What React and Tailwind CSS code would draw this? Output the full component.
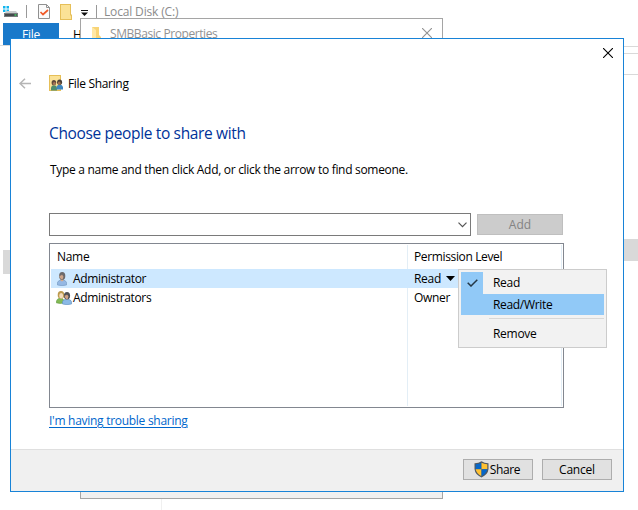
import React from "react";

function CloseIcon({ className }) {
  return (
    <svg className={className} width="10" height="10" viewBox="0 0 10 10" fill="none" stroke="currentColor" strokeWidth="1.1">
      <path d="M0 0L10 10M10 0L0 10" />
    </svg>
  );
}

function FolderIcon({ people }) {
  return (
    <svg width="14" height="16" viewBox="0 0 14 16">
      {people ? (
        <path d="M0 0H12V16H0Z" fill="#e6bf58" />
      ) : (
        <path d="M0 0H11V10.500H12V16H0Z" fill="#e6bf58" />
      )}
      {people ? (
        <path d="M1 1H11V15H1Z" fill="#fbe296" />
      ) : (
        <path d="M1 1H10V11.500H11V15H1Z" fill="#fbe296" />
      )}
      {people && (
        <g>
          <path d="M2 15.500V12.500Q2.500 10.300 5 10.300Q7.500 10.300 8 12.500V15.500Z" fill="#4f8d6c" />
          <ellipse cx="4.900" cy="7.700" rx="2.300" ry="2.600" fill="#60493a" />
          <ellipse cx="5.300" cy="8.600" rx="1.400" ry="1.600" fill="#a87555" />
          <path d="M7.500 14.500V12Q8 9.800 10.800 9.800Q13.500 9.800 14 12V14.500Z" fill="#3f86c0" />
          <ellipse cx="10.600" cy="7.200" rx="2.500" ry="2.600" fill="#4b4038" />
          <ellipse cx="10.200" cy="8.200" rx="1.400" ry="1.600" fill="#9d6f50" />
        </g>
      )}
    </svg>
  );
}

function DriveIcon() {
  return (
    <svg width="15" height="13" viewBox="0 0 15 13">
      <path d="M0 1H2.500V3.500H0ZM3.500 1H6V3.500H3.500ZM0 4.500H2.500V7H0ZM3.500 4.500H6V7H3.500Z" fill="#12b5ee" />
      <path d="M3.500 6H13L15 8.500H1.500Z" fill="#c9cccd" />
      <path d="M1 8H15V12H1Z" fill="#777b7d" />
      <path d="M2 9H14V11H2Z" fill="#45494c" />
      <path d="M11.500 9.300H13.500V10.700H11.500Z" fill="#41d765" />
    </svg>
  );
}

function CheckedPage() {
  return (
    <svg width="12" height="15" viewBox="0 0 12 15" fill="none">
      <path d="M.5.5H8.500L11.500 3.500V14.500H.5Z" fill="#fafafa" stroke="#909090" />
      <path d="M8.500.5V3.500H11.500" stroke="#909090" />
      <path d="M2.500 8L5 10.500L10 6" stroke="#f05a28" strokeWidth="1.700" />
    </svg>
  );
}

function UserIcon() {
  return (
    <svg width="10" height="14" viewBox="0 0 10 14">
      <path d="M.5 13V10.500Q1 8 5 8Q9 8 9.500 10.500V13Q5 14.300.5 13Z" fill="#94b8e4" stroke="#7095be" strokeWidth=".6" />
      <path d="M3.500 6H6.500V8.500L5 9.500L3.500 8.500Z" fill="#d8a985" />
      <ellipse cx="5.200" cy="4" rx="3.100" ry="3.900" fill="#6c6a6c" />
      <path d="M2.300 3.700Q4 4 5 2.500L6.500 4.700L5.500 7.500Q3 7.500 2.300 3.700Z" fill="#cda58b" />
    </svg>
  );
}

function GroupIcon() {
  return (
    <svg width="16" height="14" viewBox="0 0 16 14">
      <path d="M.3 11.800Q.5 7.200 4.500 7.200Q8 7.200 8.500 11.800Q4 13 .3 11.800Z" fill="#83ba55" stroke="#5c9639" strokeWidth=".6" />
      <ellipse cx="5" cy="3.900" rx="3.300" ry="3.800" fill="#bd9a4d" />
      <ellipse cx="5.200" cy="4.800" rx="2" ry="2.700" fill="#f3dcbd" />
      <path d="M6.500 13V10.700Q7 8.300 11 8.300Q15 8.300 15.500 10.700V13Q11 14.300 6.500 13Z" fill="#8bb9e6" stroke="#5c8fc0" strokeWidth=".6" />
      <ellipse cx="11" cy="4.700" rx="3.100" ry="3.800" fill="#4f5054" />
      <path d="M8.500 4.500Q10 4.700 11 3.400L12.500 5.300L11.500 8.500Q9 8 8.500 4.500Z" fill="#cfa184" />
    </svg>
  );
}

function ShieldIcon() {
  return (
    <svg width="15" height="17" viewBox="0 0 15 17">
      <path d="M7.500.3Q4.500 2.300.5 2.200V8Q1 13.500 7.500 16.500Q14 13.500 14.500 8V2.200Q10.500 2.300 7.500.3Z" fill="#505963" />
      <path d="M7.500 1.700Q5 3.100 1.700 3.200V8.300H7.500Z" fill="#0767c8" />
      <path d="M7.500 1.700Q10 3.100 13.300 3.200V8.300H7.500Z" fill="#ffc132" />
      <path d="M1.700 8.300Q2.200 12.500 7.500 15.200V8.300Z" fill="#ffc132" />
      <path d="M13.300 8.300Q12.800 12.500 7.500 15.200V8.300Z" fill="#0767c8" />
    </svg>
  );
}

function ExplorerWindow() {
  return (
    <div className="h-[510px] w-[638px] bg-white">
      <div className="flex h-[23px] items-start text-[#8b8b8b]">
        <div className="ml-[3px] mt-[5px]"><DriveIcon /></div>
        <div className="ml-[8px] mt-[5px] h-[13px] w-px bg-[#999]" />
        <div className="ml-[11px] mt-[4px]"><CheckedPage /></div>
        <div className="ml-[10px] mt-[4px]"><FolderIcon /></div>
        <svg className="ml-[7px] mt-[10px]" width="7" height="6" viewBox="0 0 7 6"><path d="M0 0H7V1H0ZM0 2.500H7L3.500 6Z" fill="#111" /></svg>
        <div className="ml-[8px] mt-[5px] h-[13px] w-px bg-[#999]" />
        <span className="ml-[7px] mt-[4px] leading-4 tracking-[-0.16px]">Local Disk (C:)</span>
      </div>
      <div className="flex h-[22px]">
        <div className="ml-[3px] w-[56px] bg-[#1979ca] pl-[19px] pt-[4px] leading-4 text-white">File</div>
        <span className="ml-[14px] pt-[4px] leading-4">Home</span>
      </div>
      <div className="flex h-[205px] justify-between">
        <div className="h-px w-[12px] bg-[#dadada]" />
        <div className="mt-px h-[29px] w-[20px] border-y border-[#d9d9d9] pt-[6px]"><div className="h-px bg-[#d9d9d9]" /></div>
      </div>
      <div className="-mt-[11px] flex justify-between">
        <div className="ml-[3px] mt-[11px] h-[24px] w-[10px] bg-[#d9d9d9]" />
        <div className="h-[22px] w-[16px] bg-[#d9d9d9]" />
      </div>
      <div className="ml-[161px] h-[236px] w-px bg-[#f0f0f0]" />
    </div>
  );
}

function PropertiesWindow() {
  return (
    <div className="absolute left-[80px] top-[18px] flex h-[481px] w-[363px] flex-col justify-between border border-[#a5a5a5] bg-white text-[#929292]">
      <div className="flex">
        <svg className="ml-[11px] mt-[8px]" width="10" height="13" viewBox="0 0 10 13"><path d="M0 0H7V8L9 10V13L0 11Z" fill="#f8d477" /><path d="M0 0L4 3V13L0 11Z" fill="#ffe8a5" /></svg>
        <span className="ml-[8px] mt-[7px] leading-4 tracking-[-0.42px]">SMBBasic Properties</span>
        <CloseIcon className="ml-auto mr-[10px] mt-[9px]" />
      </div>
      <div className="h-[20px] bg-[#f0f0f0]" />
    </div>
  );
}

function PermissionMenu() {
  return (
    <div className="absolute left-[447px] top-[230px] flex h-[79px] w-[149px] flex-col border border-[#ccc] bg-[#f2f2f2] p-[2px]">
      <div className="flex h-[22px] items-center">
        <div className="flex h-full w-[22px] items-center justify-center bg-[#91c9f7]">
          <svg width="11" height="8" viewBox="0 0 11 8" fill="none" stroke="#243746" strokeWidth="1.500"><path d="M.7 3.700L4 7L10.300.7" /></svg>
        </div>
        <span className="ml-[10px] leading-4">Read</span>
      </div>
      <div className="flex h-[22px] items-center bg-[#91c9f7] pl-[32px] leading-4 tracking-[-0.33px]">Read/Write</div>
      <div className="ml-[28px] mt-[3px] h-px bg-[#d7d7d7]" />
      <div className="mt-[4px] flex h-[22px] items-center pl-[32px] leading-4">Remove</div>
    </div>
  );
}

function SharingDialog() {
  return (
    <div className="absolute left-[10px] top-[38px] flex h-[454px] w-[614px] flex-col border border-[#1883d7] bg-white">
      <div className="flex h-[32px] justify-end pr-[10px] pt-[9px]"><CloseIcon /></div>
      <div className="flex h-[48px] items-start">
        <svg className="ml-[8px] mt-[7px]" width="12" height="11" viewBox="0 0 12 11" fill="none" stroke="#b5b5b5" strokeWidth="1.500"><path d="M12 5.500H1M6 .7L1 5.500L6 10.300" /></svg>
        <div className="ml-[18px] mt-[4px]"><FolderIcon people /></div>
        <span className="ml-[5px] mt-[5px] leading-4 tracking-[-0.33px]">File Sharing</span>
      </div>
      <div className="flex flex-col px-[38px]">
        <h1 className="mt-[2px] h-[25px] text-[15.5px] leading-6 tracking-[-0.35px] text-[#003399]">Choose people to share with</h1>
        <p className="mt-[16px] h-[16px] pl-px leading-4 tracking-[-0.3px]">Type a name and then click Add, or click the arrow to find someone.</p>
        <div className="mt-[35px] flex h-[23px] items-center gap-[6px]">
          <div className="flex h-full w-[422px] items-center justify-end border border-[#7a7a7a] pr-[3px]">
            <svg width="9" height="6" viewBox="0 0 9 6" fill="none" stroke="#555" strokeWidth="1.200"><path d="M.5.700L4.500 4.700L8.500.700" /></svg>
          </div>
          <button className="h-[21px] w-[86px] border border-[#bfbfbf] bg-[#ccc] leading-[19px] tracking-normal text-[#838383]">Add</button>
        </div>
        <div className="mt-[7px] h-[165px] w-[515px] border border-[#828790] p-px">
          <div className="flex h-full flex-col bg-[linear-gradient(#e3eef6,#e3eef6),linear-gradient(#e3eef6,#e3eef6)] bg-[length:1px_100%,1px_100%] bg-[position:356px_0,510px_0] bg-no-repeat">
            <div className="flex h-[24px] items-center pl-[6px]">
              <span className="w-[357px]">Name</span><span className="tracking-[-0.36px]">Permission Level</span>
            </div>
            <div className="flex h-[19px] items-center bg-[#cde8ff]">
              <div className="flex w-[22px] justify-center"><UserIcon /></div>
              <span className="w-[341px] tracking-[-0.33px]">Administrator</span><span className="w-[32px]">Read</span>
              <svg width="9" height="5" viewBox="0 0 9 5"><path d="M0 0H9L4.500 5Z" fill="#000" /></svg>
            </div>
            <div className="flex h-[19px] items-center">
              <div className="flex w-[22px] justify-end pr-px"><GroupIcon /></div>
              <span className="w-[341px] tracking-[-0.35px]">Administrators</span><span>Owner</span>
            </div>
          </div>
        </div>
        <a className="mt-[5px] h-[16px] leading-4 tracking-[-0.28px] text-[#0066cc] underline underline-offset-2">I'm having trouble sharing</a>
      </div>
      <div className="mt-auto flex h-[42px] items-start justify-end gap-[9px] border-t border-[#dfdfdf] bg-[#f0f0f0] pr-[11px] pt-[9px]">
        <button className="flex h-[21px] w-[70px] items-center justify-center gap-px border border-[#adadad] bg-[#e1e1e1] pr-[2px] tracking-[-0.4px]"><ShieldIcon />Share</button>
        <button className="h-[21px] w-[70px] border border-[#adadad] bg-[#e1e1e1] leading-[19px] tracking-[-0.2px]">Cancel</button>
      </div>
      <PermissionMenu />
    </div>
  );
}

export default function App() {
  return (
    <main className="relative h-[510px] w-[638px] overflow-hidden bg-white font-['Open_Sans','Noto_Sans',sans-serif] text-[12px] leading-4 tracking-[-0.29px] text-black">
      <ExplorerWindow />
      <PropertiesWindow />
      <SharingDialog />
    </main>
  );
}
